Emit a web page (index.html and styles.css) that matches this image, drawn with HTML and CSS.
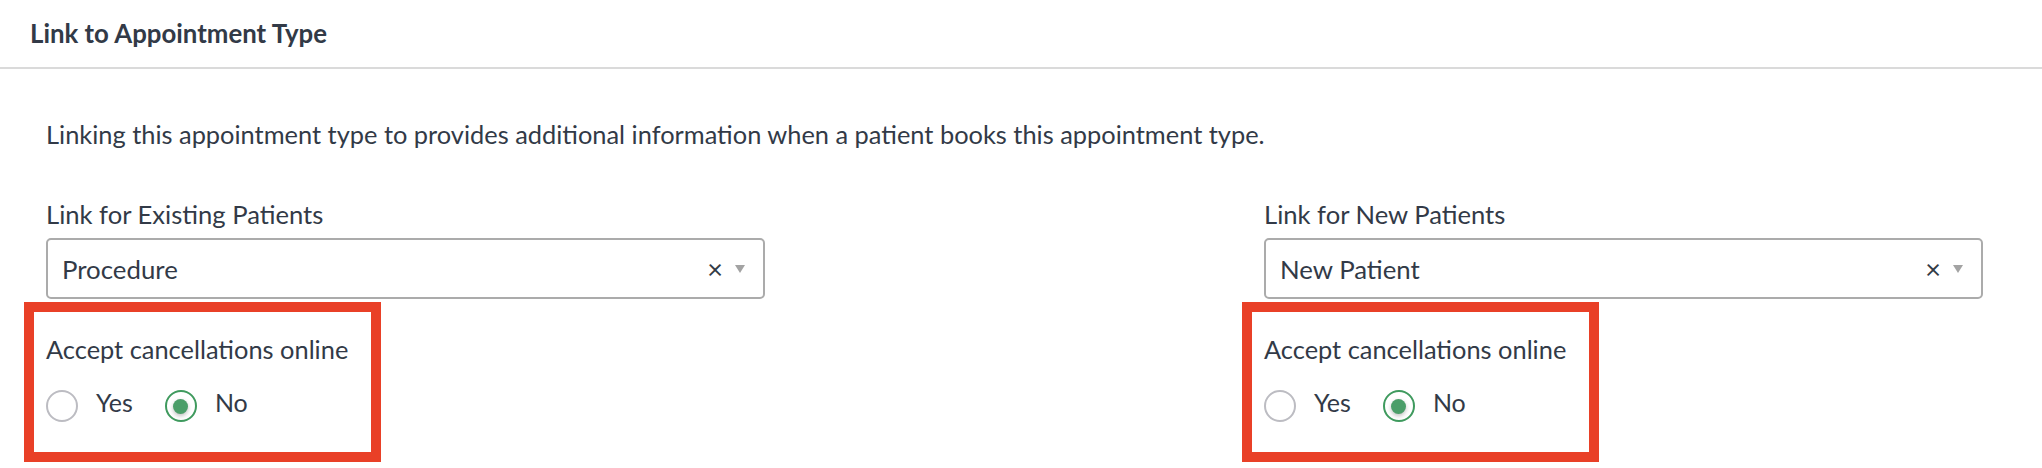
FILE: index.html
```html
<!DOCTYPE html>
<html lang="en">
<head>
  <meta charset="UTF-8">
  <meta name="viewport" content="width=device-width, initial-scale=1">
  <title>Link to Appointment Type</title>
  <link rel="stylesheet" href="styles.css">
</head>
<body>
  <div class="panel">
    <div class="panel-header">
      <h2>Link to Appointment Type</h2>
    </div>
    <div class="panel-body">
      <p class="intro">Linking this appointment type to provides additional information when a patient books this appointment type.</p>

      <div class="link-grid">
        <div class="link-col">
          <label class="field-label">Link for Existing Patients</label>
          <div class="select-box">
            <span class="select-value">Procedure</span>
            <span class="select-clear">&times;</span>
            <span class="select-arrow"></span>
          </div>
          <div class="cancel-group">
            <div class="cancel-label">Accept cancellations online</div>
            <div class="radio-row">
              <label class="radio-option"><span class="radio"></span><span class="radio-text">Yes</span></label>
              <label class="radio-option"><span class="radio checked"></span><span class="radio-text">No</span></label>
            </div>
          </div>
        </div>

        <div class="link-col">
          <label class="field-label">Link for New Patients</label>
          <div class="select-box">
            <span class="select-value">New Patient</span>
            <span class="select-clear">&times;</span>
            <span class="select-arrow"></span>
          </div>
          <div class="cancel-group">
            <div class="cancel-label">Accept cancellations online</div>
            <div class="radio-row">
              <label class="radio-option"><span class="radio"></span><span class="radio-text">Yes</span></label>
              <label class="radio-option"><span class="radio checked"></span><span class="radio-text">No</span></label>
            </div>
          </div>
        </div>
      </div>
    </div>
  </div>
</body>
</html>
```

FILE: styles.css
```css
* {
  margin: 0;
  padding: 0;
  box-sizing: border-box;
}

body {
  font-family: Lato, 'Open Sans', sans-serif;
  color: #323a47;
  background: #fff;
}

.panel-header {
  padding: 17px 30px 18px;
  border-bottom: 2px solid #dadada;
}

.panel-header h2 {
  font-size: 25.8px;
  line-height: 32px;
  font-weight: 700;
}

.panel-body {
  padding: 50px 46px 0;
}

.intro {
  font-size: 25.4px;
  line-height: 30px;
  margin-bottom: 50px;
}

.link-grid {
  display: grid;
  grid-template-columns: 719px 719px;
  column-gap: 499px;
}

.field-label {
  display: block;
  font-size: 25.6px;
  line-height: 30px;
  margin-bottom: 9px;
}

.select-box {
  display: flex;
  align-items: center;
  height: 61px;
  padding: 0 18px 0 14px;
  border: 2px solid #ababab;
  border-radius: 5px;
}

.select-value {
  flex: 1;
  font-size: 25.8px;
  line-height: 30px;
}

.select-clear {
  font-size: 27px;
  line-height: 30px;
  color: #333a45;
  margin-right: 12px;
}

.select-arrow {
  width: 0;
  height: 0;
  border-left: 5px solid transparent;
  border-right: 5px solid transparent;
  border-top: 8px solid #a3a3a3;
}

.cancel-group {
  width: 357px;
  margin: 3px 0 0 -22px;
  padding: 22px 10px 30px 12px;
  border: 10px solid #e94027;
}

.cancel-label {
  font-size: 25.4px;
  line-height: 30px;
}

.radio-row {
  display: flex;
  align-items: center;
  margin-top: 26px;
  height: 32px;
}

.radio-option {
  display: flex;
  align-items: center;
  margin-right: 32px;
}

.radio-text {
  font-size: 25px;
  line-height: 30px;
  padding-bottom: 8px;
}

.radio {
  width: 32px;
  height: 32px;
  margin-right: 18px;
  border: 2px solid #bcbcc2;
  border-radius: 50%;
  display: flex;
  align-items: center;
  justify-content: center;
}

.radio.checked {
  border-color: #3f9a5e;
}

.radio.checked::after {
  content: "";
  width: 15px;
  height: 15px;
  border-radius: 50%;
  background: #4b9e69;
  box-shadow: 0 2px 4px rgba(0, 0, 0, 0.25);
}
```
